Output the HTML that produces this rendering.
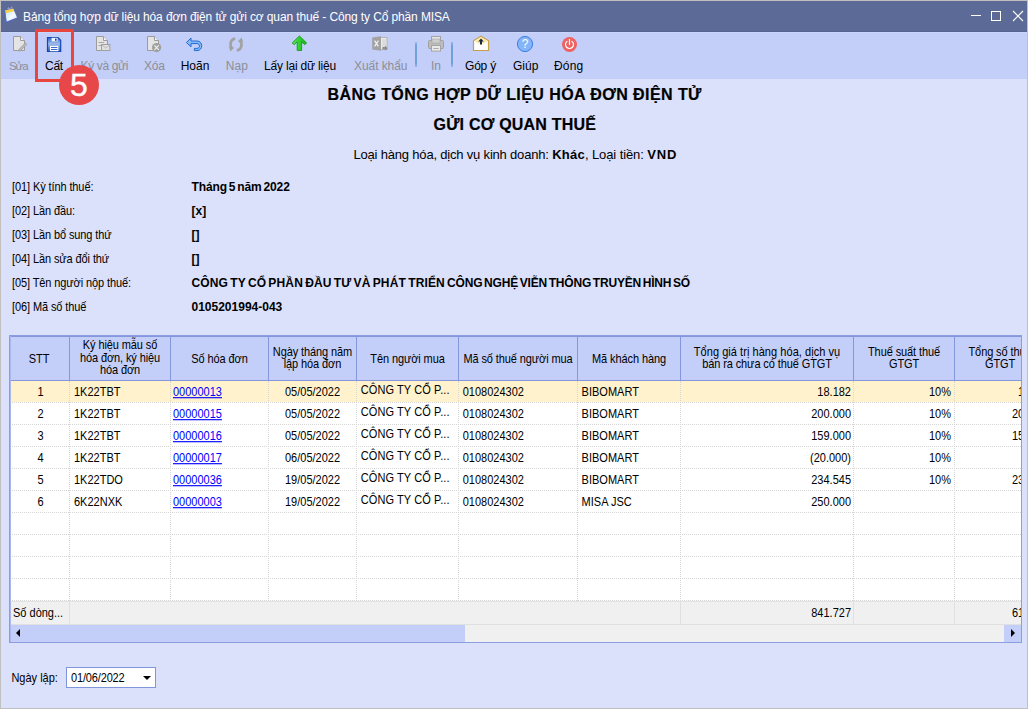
<!DOCTYPE html>
<html lang="vi">
<head>
<meta charset="utf-8">
<title>Bảng tổng hợp dữ liệu hóa đơn điện tử gửi cơ quan thuế</title>
<style>
html,body{margin:0;padding:0;}
body{width:1028px;height:709px;overflow:hidden;background:#DBE1FA;font-family:"Liberation Sans",sans-serif;color:#000;position:relative;}
.abs{position:absolute;white-space:nowrap;}
#win{position:absolute;left:0;top:0;width:1028px;height:709px;box-sizing:border-box;border:1px solid #C0C0BE;pointer-events:none;z-index:50;}
#titlebar{position:absolute;left:0;top:0;width:1028px;height:32px;background:#5C6A98;box-shadow:inset 0 -1px 0 #55638F;}
#ttext{left:23px;top:10px;letter-spacing:-0.12px;font-size:12px;line-height:14px;color:#fff;}
#toolbar{position:absolute;left:0;top:32px;width:1028px;height:47px;background:#C3CFF8;box-shadow:inset 0 1px 0 #CAD6FC;}
.tl{font-size:12px;line-height:14px;top:59px;color:#000;}
.tl.dis{color:#8C8E96;}
.ico{position:absolute;}
.sep{position:absolute;top:42px;width:2px;height:25px;background:linear-gradient(to bottom,rgba(111,160,220,0.5),#6FA0DC 15%,#6FA0DC 85%,rgba(111,160,220,0.5));}
/* heading */
.h1{font-weight:bold;font-size:16px;line-height:20px;color:#000;-webkit-text-stroke:0.2px #000;}
.sub{font-size:13px;line-height:16px;}
.lb{font-size:11px;line-height:14px;left:12px;letter-spacing:-0.1px;transform:scaleY(1.13);transform-origin:0 11px;}
.val{font-size:12px;line-height:14px;left:191.5px;font-weight:bold;word-spacing:-1.3px;}
/* grid */
#grid{position:absolute;left:10px;top:336px;width:1011px;height:306px;background:#fff;overflow:hidden;}
#gborder{position:absolute;left:9px;top:335px;width:1013px;height:308px;box-sizing:border-box;border:1px solid #8C9EE0;box-shadow:inset 1px 0 0 #A9B8EC;pointer-events:none;z-index:5;}
#ghead{position:absolute;left:0;top:0;width:1011px;height:45px;background:#C3CFF8;border-top:1px solid #8497DC;border-bottom:1px solid #8497DC;box-sizing:border-box;}
.hc{position:absolute;top:0;height:43px;border-left:1px solid #8497DC;box-sizing:border-box;}
.ht{position:absolute;white-space:nowrap;letter-spacing:-0.1px;font-size:11px;line-height:10.55px;text-align:center;transform:translateX(-50%) scaleY(1.13);transform-origin:50% 0;}
.row{position:absolute;left:0;width:1011px;height:22px;box-sizing:border-box;border-bottom:1px dotted #D6D6D6;}
.row.sel{background:#FFF2CC;background-clip:padding-box;}
.vl{position:absolute;top:45px;width:0;height:220px;border-left:1px dotted #D6D6D6;}
.c{position:absolute;white-space:nowrap;font-size:11px;line-height:14px;transform:scaleY(1.13);transform-origin:0 11px;}
.r{text-align:right;}
a.lk{color:#0000FF;text-decoration:underline;}
#gfoot{position:absolute;left:0;top:265px;width:1011px;height:24px;background:#F0F0F0;border-top:1px solid #E3E3E3;border-bottom:1px solid #E0E0E0;box-sizing:border-box;}
.fv{position:absolute;top:0;width:1px;height:22px;background:#E0E0E0;}
#gscroll{position:absolute;left:0;top:289px;width:1011px;height:17px;background:#F0F0F0;}
#thumb{position:absolute;left:0;top:0;width:455px;height:17px;background:#C3CFF8;}
#rbtn{position:absolute;left:994px;top:0;width:17px;height:17px;background:#C3CFF8;}
#date{position:absolute;left:66px;top:667px;width:90px;height:21px;box-sizing:border-box;border:1px solid #7F96DC;background:#fff;}
</style>
</head>
<body>
<div id="titlebar">
<svg class="ico" style="left:3px;top:6px" width="16" height="18" viewBox="0 0 16 18">
<defs><linearGradient id="gcal" x1="0" y1="0" x2="1" y2="1"><stop offset="0" stop-color="#BFE3FF"/><stop offset="0.6" stop-color="#F2FAFF"/><stop offset="1" stop-color="#CFE4FF"/></linearGradient></defs>
<path d="M1.2 5.6 L3 16.4 L13.8 12.6 L13.4 11.4 Z" fill="#5B63D8" opacity="0.9"/>
<path d="M2.2 4.5 L10.2 2.8 L14 11.5 L3.6 15.5 Z" fill="url(#gcal)"/>
<path d="M2.2 4.5 L10.2 2.8 L10.9 5.2 L2.6 7.2 Z" fill="#F6CF45"/>
<path d="M1.4 5 L2.2 4.5 L3.6 15.5 L3 16.2 Z" fill="#3F7CF0"/>
<path d="M5 3.4 C4.6 1.4 6.2 1.2 6.4 3 M8 2.8 C7.6 0.8 9.2 0.6 9.4 2.4" fill="none" stroke="#B7C3F0" stroke-width="0.7"/>
</svg>
<div class="abs" id="ttext">Bảng tổng hợp dữ liệu hóa đơn điện tử gửi cơ quan thuế - Công ty Cổ phần MISA</div>
<svg class="ico" style="left:966px;top:6px" width="60" height="20" viewBox="0 0 60 20" shape-rendering="crispEdges">
<rect x="5" y="9" width="10" height="1" fill="#fff"/>
<rect x="25.5" y="5.5" width="9" height="9" fill="none" stroke="#fff" stroke-width="1"/>
<g shape-rendering="auto" stroke="#fff" stroke-width="1.1"><path d="M47 5 L57 15 M57 5 L47 15"/></g>
</svg>
</div>
<div id="toolbar"></div>
<div class="abs tl dis" id="l1" style="left:9px;letter-spacing:-1.1px;font-size:11.5px">Sửa</div>
<div class="abs tl" id="l2" style="left:45px;letter-spacing:-0.25px">Cất</div>
<div class="abs tl dis" id="l3" style="left:80.5px;letter-spacing:-0.35px">Ký và gửi</div>
<div class="abs tl dis" id="l4" style="left:144px;letter-spacing:-0.25px">Xóa</div>
<div class="abs tl" id="l5" style="left:180.7px">Hoãn</div>
<div class="abs tl dis" id="l6" style="left:225.8px">Nạp</div>
<div class="abs tl" id="l7" style="left:264px;letter-spacing:-0.18px">Lấy lại dữ liệu</div>
<div class="abs tl dis" id="l8" style="left:354px;letter-spacing:-0.07px">Xuất khẩu</div>
<div class="abs tl dis" id="l9" style="left:431px">In</div>
<div class="abs tl" id="l10" style="left:465px;letter-spacing:-0.2px">Góp ý</div>
<div class="abs tl" id="l11" style="left:513px">Giúp</div>
<div class="abs tl" id="l12" style="left:554px;letter-spacing:0.2px">Đóng</div>
<div class="sep" style="left:415px"></div><div class="sep" style="left:451px"></div>

<!-- Sua: page + pencil (disabled) -->
<svg class="ico" style="left:12px;top:35px" width="17" height="18" viewBox="0 0 17 18">
<path d="M1.5 1.5 H8.5 L12.5 5.5 V15.5 H1.5 Z" fill="#E4E4E4" stroke="#9C9C9C" stroke-width="1"/>
<path d="M8.5 1.5 V5.5 H12.5" fill="#F2F2F2" stroke="#9C9C9C" stroke-width="1"/>
<path d="M14.2 8.4 L7 15.8" stroke="#A0A0A0" stroke-width="2.6" stroke-linecap="butt"/><path d="M14 8.6 L7.6 15.2" stroke="#D4D4D4" stroke-width="0.9"/><path d="M7.4 14.4 L6 16.8 L8.6 15.8 Z" fill="#B0B0B0"/>
</svg>
<!-- Cat: floppy -->
<svg class="ico" style="left:46px;top:36px" width="16" height="17" viewBox="0 0 16 17">
<defs><linearGradient id="gfl" x1="0" y1="0" x2="0" y2="1"><stop offset="0" stop-color="#2D62C8"/><stop offset="0.45" stop-color="#9DBBEC"/><stop offset="1" stop-color="#2C5FC4"/></linearGradient></defs>
<path d="M1.5 1.5 H12 L14.7 4.2 V15.5 H1.5 Z" fill="url(#gfl)" stroke="#1546B0" stroke-width="1.2"/>
<rect x="5.6" y="1.8" width="6" height="3.6" fill="#F3F7FF"/>
<rect x="9" y="2.6" width="1.6" height="2.2" fill="#1546B0"/>
<rect x="4" y="9.8" width="8.4" height="5.4" fill="#FFFFFF"/>
<rect x="5" y="11" width="6.4" height="1" fill="#3C6CCB"/>
<rect x="5" y="13" width="6.4" height="1" fill="#3C6CCB"/>
</svg>
<!-- Ky va gui: page + envelope (disabled) -->
<svg class="ico" style="left:95px;top:35px" width="17" height="17" viewBox="0 0 17 17">
<path d="M1.5 1.5 H8.5 L12.5 5.5 V15.5 H1.5 Z" fill="#E4E4E4" stroke="#9C9C9C" stroke-width="1"/>
<path d="M8.5 1.5 V5.5 H12.5" fill="#F2F2F2" stroke="#9C9C9C" stroke-width="1"/>
<rect x="3.6" y="7" width="5.6" height="1" fill="#A8A8A8"/>
<rect x="3.6" y="10" width="3" height="1" fill="#A8A8A8"/>
<rect x="6.5" y="9.5" width="8.4" height="6" fill="#E0E0E0" stroke="#A0A0A0" stroke-width="1"/>
<path d="M7 10 L10.7 13 L14.4 10" fill="none" stroke="#B4B4B4" stroke-width="0.9"/>
</svg>
<!-- Xoa: page + x circle (disabled) -->
<svg class="ico" style="left:146px;top:35px" width="17" height="18" viewBox="0 0 17 18">
<path d="M1.5 1.5 H8.5 L12.5 5.5 V15.5 H1.5 Z" fill="#E4E4E4" stroke="#9C9C9C" stroke-width="1"/>
<path d="M8.5 1.5 V5.5 H12.5" fill="#F2F2F2" stroke="#9C9C9C" stroke-width="1"/>
<circle cx="10.6" cy="12.6" r="4.6" fill="#A0A0A0"/>
<path d="M8.4 10.4 L12.8 14.8 M12.8 10.4 L8.4 14.8" stroke="#F0F0F0" stroke-width="1.2"/>
</svg>
<!-- Hoan: undo -->
<svg class="ico" style="left:185px;top:36px" width="19" height="17" viewBox="0 0 19 17">
<path d="M1.4 6.5 L6 2 V5 H12 C18 5 18.6 14.4 12 14.6 H9.4 V12.4 H12 C15.4 12.2 15.2 7.6 12 7.6 H6 V10.8 Z" fill="#8AB8F4" stroke="#1E6CD6" stroke-width="1" stroke-linejoin="round"/>
</svg>
<!-- Nap: refresh (disabled) -->
<svg class="ico" style="left:227px;top:36px" width="18" height="17" viewBox="0 0 18 17">
<path d="M8.2 2.6 C3.6 3.2 2.2 8.6 4.8 11.8" fill="none" stroke="#A2A2A2" stroke-width="2.6"/>
<path d="M1.8 10.8 L7.4 11.6 L3.4 15.4 Z" fill="#A2A2A2"/>
<path d="M9.8 14.4 C14.4 13.8 15.8 8.4 13.2 5.2" fill="none" stroke="#A2A2A2" stroke-width="2.6"/>
<path d="M16.2 6.2 L10.6 5.4 L14.6 1.6 Z" fill="#A2A2A2"/>
</svg>
<!-- Lay lai du lieu: green up arrow -->
<svg class="ico" style="left:290px;top:34px" width="19" height="18" viewBox="0 0 19 18">
<defs><linearGradient id="ggr" x1="0" y1="0" x2="1" y2="0"><stop offset="0" stop-color="#6BE36B"/><stop offset="0.5" stop-color="#2FD02F"/><stop offset="1" stop-color="#1FAE1F"/></linearGradient></defs>
<path d="M9.4 2 L16.6 9 L14.6 10.6 L11.6 7.8 V16.4 H7.2 V7.8 L4.2 10.6 L2.2 9 Z" fill="url(#ggr)" stroke="#1E9E1E" stroke-width="1" stroke-linejoin="round"/>
</svg>
<!-- Xuat khau: excel (disabled) -->
<svg class="ico" style="left:371px;top:35px" width="18" height="18" viewBox="0 0 18 18">
<rect x="9" y="2.6" width="7" height="11.8" fill="#ECECEC" stroke="#ABABAB" stroke-width="0.8"/>
<path d="M11 5 H15 M11 7 H15 M11 9 H15 M11 11 H15" stroke="#C4C4C4" stroke-width="0.8"/>
<path d="M1.2 2.6 L10 1.2 V15.8 L1.2 14.4 Z" fill="#A2A2A2"/>
<path d="M3.6 5.6 L7.4 11.4 M7.4 5.6 L3.6 11.4" stroke="#F0F0F0" stroke-width="1.3"/>
<path d="M11.4 12 H14 V10.6 L16.8 13.2 L14 15.8 V14.4 H11.4 Z" fill="#8E8E8E"/>
</svg>
<!-- In: printer (disabled) -->
<svg class="ico" style="left:427px;top:35px" width="18" height="18" viewBox="0 0 18 18">
<rect x="4.5" y="1.5" width="9" height="6" fill="#E6E6E6" stroke="#A4A4A4" stroke-width="1"/>
<rect x="1.5" y="5.5" width="15" height="8" rx="1" fill="#BDBDBD" stroke="#A0A0A0" stroke-width="1"/>
<rect x="5" y="4" width="8" height="4" fill="#CFCFCF" stroke="#A4A4A4" stroke-width="0.6"/>
<rect x="4.5" y="10.5" width="9" height="5.6" fill="#E9E9E9" stroke="#A4A4A4" stroke-width="1"/>
<rect x="6.4" y="13" width="5.2" height="1" fill="#ACACAC"/>
</svg>
<!-- Gop y: envelope with up arrow -->
<svg class="ico" style="left:472px;top:35px" width="18" height="17" viewBox="0 0 18 17">
<path d="M1.5 5.8 L9 1.2 L16.5 5.8 V15.5 H1.5 Z" fill="#FFFFFF" stroke="#C7A044" stroke-width="1.2" stroke-linejoin="round"/>
<path d="M2.2 6 L9 1.9 L15.8 6 L9 10 Z" fill="#FBE9A8"/>
<path d="M2.2 6.2 L9 10.2 L15.8 6.2 V8 L9 12 L2.2 8 Z" fill="#FFFFFF"/>
<path d="M9 3.6 L11.8 6.6 H10 V9.4 H8 V6.6 H6.2 Z" fill="#1B2A4A"/>
</svg>
<!-- Giup: help -->
<svg class="ico" style="left:516px;top:35px" width="18" height="18" viewBox="0 0 18 18">
<circle cx="9" cy="9" r="7.6" fill="#86B4F8" stroke="#3C80E2" stroke-width="1"/>
<text x="9" y="13.2" text-anchor="middle" font-family="Liberation Sans, sans-serif" font-size="12" fill="#FFFFFF">?</text>
</svg>
<!-- Dong: power -->
<svg class="ico" style="left:561px;top:36px" width="17" height="17" viewBox="0 0 17 17">
<circle cx="8.5" cy="8.5" r="7.5" fill="#EE6262"/>
<path d="M6 5.4 A4 4 0 1 0 11 5.4" fill="none" stroke="#FFFFFF" stroke-width="1.2" stroke-linecap="round"/>
<path d="M8.5 3.6 V8.4" stroke="#FFFFFF" stroke-width="1.2" stroke-linecap="round"/>
</svg>
<!-- annotation -->
<div id="redbox" style="position:absolute;left:35px;top:29px;width:39px;height:53px;box-sizing:border-box;border:3px solid #E8453F;z-index:20"></div>
<div id="redcirc" style="position:absolute;left:59px;top:65px;width:40px;height:40px;border-radius:50%;background:#E8474A;z-index:21"></div>
<div class="abs" id="five" style="left:59px;top:65px;width:40px;height:40px;line-height:40px;text-align:center;color:#fff;font-size:32px;-webkit-text-stroke:0.4px #fff;z-index:22">5</div>
<div class="abs h1" id="h1a" style="left:327.5px;top:85px;letter-spacing:0.42px">BẢNG TỔNG HỢP DỮ LIỆU HÓA ĐƠN ĐIỆN TỬ</div>
<div class="abs h1" id="h1b" style="left:433.5px;top:115px;letter-spacing:0.2px">GỬI CƠ QUAN THUẾ</div>
<div class="abs sub" id="sub" style="left:353.5px;top:147px;letter-spacing:-0.1px"><span style="letter-spacing:-0.19px">Loại hàng hóa, dịch vụ kinh doanh: </span><b style="letter-spacing:0.25px">Khác</b>, Loại tiền: <b style="letter-spacing:0.8px">VND</b></div>
<div class="abs lb" id="lb1" style="top:180px">[01] Kỳ tính thuế:</div><div class="abs val" id="v1" style="top:180px;letter-spacing:-0.12px">Tháng 5 năm 2022</div>
<div class="abs lb" id="lb2" style="top:204px">[02] Lần đầu:</div><div class="abs val" id="v2" style="top:204px">[x]</div>
<div class="abs lb" id="lb3" style="top:228px">[03] Lần bổ sung thứ</div><div class="abs val" id="v3" style="top:228px">[]</div>
<div class="abs lb" id="lb4" style="top:252px">[04] Lần sửa đổi thứ</div><div class="abs val" id="v4" style="top:252px">[]</div>
<div class="abs lb" id="lb5" style="top:276px">[05] Tên người nộp thuế:</div><div class="abs val" id="v5" style="top:276px;letter-spacing:-0.03px"><span style="letter-spacing:0.15px">CÔNG TY CỔ PHẦN ĐẦU TƯ VÀ PHÁT TRIỂN </span><span style="letter-spacing:-0.21px">CÔNG NGHỆ VIỄN THÔNG TRUYỀN HÌNH SỐ</span></div>
<div class="abs lb" id="lb6" style="top:300px">[06] Mã số thuế</div><div class="abs val" id="v6" style="top:300px">0105201994-043</div>
<div id="grid">
<div id="ghead">
<div class="hc" style="left:59px;width:1px"></div><div class="hc" style="left:160px;width:1px"></div><div class="hc" style="left:258px;width:1px"></div><div class="hc" style="left:346px;width:1px"></div><div class="hc" style="left:448px;width:1px"></div><div class="hc" style="left:567px;width:1px"></div><div class="hc" style="left:670px;width:1px"></div><div class="hc" style="left:843px;width:1px"></div><div class="hc" style="left:944px;width:1px"></div>
<div class="ht" id="hh0a" style="left:29.1px;top:16px">STT</div>
<div class="ht" id="hh1a" style="left:110.0px;top:2px">Ký hiệu mẫu số</div><div class="ht" id="hh1b" style="left:110.0px;top:15px">hóa đơn, ký hiệu</div><div class="ht" id="hh1c" style="left:110.0px;top:27px">hóa đơn</div>
<div class="ht" id="hh2a" style="left:209.5px;top:16px">Số hóa đơn</div>
<div class="ht" id="hh3a" style="left:302.5px;top:9px">Ngày tháng năm</div><div class="ht" id="hh3b" style="left:302.5px;top:21px">lập hóa đơn</div>
<div class="ht" id="hh4a" style="left:397.5px;top:16px">Tên người mua</div>
<div class="ht" id="hh5a" style="left:508.0px;top:16px">Mã số thuế người mua</div>
<div class="ht" id="hh6a" style="left:619.0px;top:16px">Mã khách hàng</div>
<div class="ht" id="hh7a" style="left:757.0px;top:9px;letter-spacing:0.05px">Tổng giá trị hàng hóa, dịch vụ</div><div class="ht" id="hh7b" style="left:757.0px;top:21px">bán ra chưa có thuế GTGT</div>
<div class="ht" id="hh8a" style="left:894.0px;top:9px">Thuế suất thuế</div><div class="ht" id="hh8b" style="left:894.0px;top:21px">GTGT</div>
<div class="ht" id="hh9a" style="left:990px;top:9px">Tổng số thuế</div><div class="ht" id="hh9b" style="left:990px;top:21px">GTGT</div>
</div>
<div class="row sel" style="top:45px"><div class="c" style="left:27.5px;top:4px">1</div><div class="c" style="left:64px;top:4px">1K22TBT</div><div class="c" style="left:163px;top:4px"><a class="lk">00000013</a></div><div class="c" style="left:258px;width:89px;text-align:center;top:4px">05/05/2022</div><div class="c" style="left:350.7px;top:2px;letter-spacing:0.1px">CÔNG TY CỔ P...</div><div class="c" style="left:452.7px;top:4px">0108024302</div><div class="c" style="left:571.6px;top:4px">BIBOMART</div><div class="c r" style="left:670px;width:171px;top:4px">18.182</div><div class="c r" style="left:843px;width:98px;top:4px">10%</div><div class="c" style="left:1008px;top:4px">1.818</div></div>
<div class="row" style="top:67px"><div class="c" style="left:27.5px;top:4px">2</div><div class="c" style="left:64px;top:4px">1K22TBT</div><div class="c" style="left:163px;top:4px"><a class="lk">00000015</a></div><div class="c" style="left:258px;width:89px;text-align:center;top:4px">05/05/2022</div><div class="c" style="left:350.7px;top:2px;letter-spacing:0.1px">CÔNG TY CỔ P...</div><div class="c" style="left:452.7px;top:4px">0108024302</div><div class="c" style="left:571.6px;top:4px">BIBOMART</div><div class="c r" style="left:670px;width:171px;top:4px">200.000</div><div class="c r" style="left:843px;width:98px;top:4px">10%</div><div class="c" style="left:1002px;top:4px">20.000</div></div>
<div class="row" style="top:89px"><div class="c" style="left:27.5px;top:4px">3</div><div class="c" style="left:64px;top:4px">1K22TBT</div><div class="c" style="left:163px;top:4px"><a class="lk">00000016</a></div><div class="c" style="left:258px;width:89px;text-align:center;top:4px">05/05/2022</div><div class="c" style="left:350.7px;top:2px;letter-spacing:0.1px">CÔNG TY CỔ P...</div><div class="c" style="left:452.7px;top:4px">0108024302</div><div class="c" style="left:571.6px;top:4px">BIBOMART</div><div class="c r" style="left:670px;width:171px;top:4px">159.000</div><div class="c r" style="left:843px;width:98px;top:4px">10%</div><div class="c" style="left:1002px;top:4px">15.900</div></div>
<div class="row" style="top:111px"><div class="c" style="left:27.5px;top:4px">4</div><div class="c" style="left:64px;top:4px">1K22TBT</div><div class="c" style="left:163px;top:4px"><a class="lk">00000017</a></div><div class="c" style="left:258px;width:89px;text-align:center;top:4px">06/05/2022</div><div class="c" style="left:350.7px;top:2px;letter-spacing:0.1px">CÔNG TY CỔ P...</div><div class="c" style="left:452.7px;top:4px">0108024302</div><div class="c" style="left:571.6px;top:4px">BIBOMART</div><div class="c r" style="left:670px;width:171px;top:4px">(20.000)</div><div class="c r" style="left:843px;width:98px;top:4px">10%</div></div>
<div class="row" style="top:133px"><div class="c" style="left:27.5px;top:4px">5</div><div class="c" style="left:64px;top:4px">1K22TDO</div><div class="c" style="left:163px;top:4px"><a class="lk">00000036</a></div><div class="c" style="left:258px;width:89px;text-align:center;top:4px">19/05/2022</div><div class="c" style="left:350.7px;top:2px;letter-spacing:0.1px">CÔNG TY CỔ P...</div><div class="c" style="left:452.7px;top:4px">0108024302</div><div class="c" style="left:571.6px;top:4px">BIBOMART</div><div class="c r" style="left:670px;width:171px;top:4px">234.545</div><div class="c r" style="left:843px;width:98px;top:4px">10%</div><div class="c" style="left:1002px;top:4px">23.455</div></div>
<div class="row" style="top:155px"><div class="c" style="left:27.5px;top:4px">6</div><div class="c" style="left:64px;top:4px">6K22NXK</div><div class="c" style="left:163px;top:4px"><a class="lk">00000003</a></div><div class="c" style="left:258px;width:89px;text-align:center;top:4px">19/05/2022</div><div class="c" style="left:350.7px;top:2px;letter-spacing:0.1px">CÔNG TY CỔ P...</div><div class="c" style="left:452.7px;top:4px">0108024302</div><div class="c" style="left:571.6px;top:4px">MISA JSC</div><div class="c r" style="left:670px;width:171px;top:4px">250.000</div><div class="c r" style="left:843px;width:98px;top:4px"></div></div>
<div class="row" style="top:177px"></div>
<div class="row" style="top:199px"></div>
<div class="row" style="top:221px"></div>
<div class="row" style="top:243px"></div>
<div class="vl" style="left:59px"></div><div class="vl" style="left:160px"></div><div class="vl" style="left:258px"></div><div class="vl" style="left:346px"></div><div class="vl" style="left:448px"></div><div class="vl" style="left:567px"></div><div class="vl" style="left:670px"></div><div class="vl" style="left:843px"></div><div class="vl" style="left:944px"></div>
<div id="gfoot"><div class="fv" style="left:59px"></div><div class="fv" style="left:670px"></div><div class="fv" style="left:843px"></div><div class="fv" style="left:944px"></div><div class="c" style="left:3px;top:4px">Số dòng...</div><div class="c r" style="left:670px;width:171px;top:4px">841.727</div><div class="c" style="left:1002px;top:4px">61.173</div></div>
<div id="gscroll"><div id="thumb"></div><div id="rbtn"></div>
<svg class="ico" style="left:6px;top:4px" width="4" height="8" viewBox="0 0 4 8"><path d="M4 0 V8 L0 4 Z" fill="#000"/></svg>
<svg class="ico" style="left:1001px;top:4px" width="4" height="8" viewBox="0 0 4 8"><path d="M0 0 V8 L4 4 Z" fill="#000"/></svg>
</div>
</div>
<div id="gborder"></div>
<div class="abs lb" id="ngay" style="left:11.4px;top:671px;letter-spacing:0">Ngày lập:</div>
<div id="date"><div class="abs c" id="dtxt" style="left:4px;top:3px;letter-spacing:-0.15px">01/06/2022</div>
<svg class="ico" style="left:76px;top:8px" width="8" height="4" viewBox="0 0 8 4"><path d="M0 0 H8 L4 4 Z" fill="#000"/></svg></div>
<div id="win"></div>
</body>
</html>
